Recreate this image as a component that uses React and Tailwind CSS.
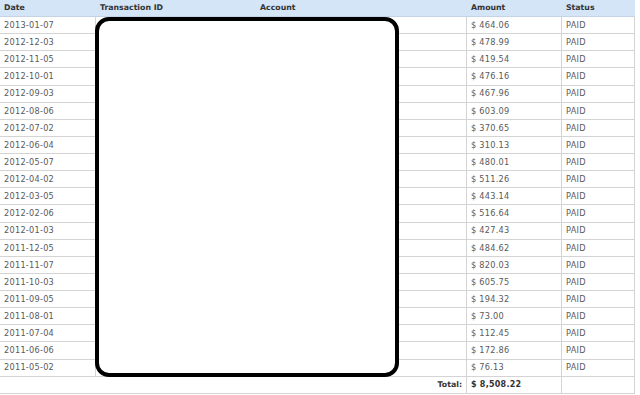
import React from "react";

const rows = [
  ["2013-01-07", "464.06"],
  ["2012-12-03", "478.99"],
  ["2012-11-05", "419.54"],
  ["2012-10-01", "476.16"],
  ["2012-09-03", "467.96"],
  ["2012-08-06", "603.09"],
  ["2012-07-02", "370.65"],
  ["2012-06-04", "310.13"],
  ["2012-05-07", "480.01"],
  ["2012-04-02", "511.26"],
  ["2012-03-05", "443.14"],
  ["2012-02-06", "516.64"],
  ["2012-01-03", "427.43"],
  ["2011-12-05", "484.62"],
  ["2011-11-07", "820.03"],
  ["2011-10-03", "605.75"],
  ["2011-09-05", "194.32"],
  ["2011-08-01", "73.00"],
  ["2011-07-04", "112.45"],
  ["2011-06-06", "172.86"],
  ["2011-05-02", "76.13"],
];

export default function App() {
  return (
    <div
      className="relative w-[640px] h-[395px] bg-white overflow-hidden text-[8.2px] tracking-[0.25px] text-[#5a5a5a]"
      style={{ fontFamily: '"DejaVu Sans", Verdana, sans-serif' }}
    >
      <div className="w-[635px] flex flex-col">
        <div className="flex h-[17px] bg-[#d3e5f7] border-b border-[#c4d4e4] font-bold text-[7.8px] tracking-normal text-[#333] items-center">
          <div className="w-[96px] pl-[4px]">Date</div>
          <div className="w-[160px] pl-[4px]">Transaction ID</div>
          <div className="w-[211px] pl-[4px]">Account</div>
          <div className="w-[95px] pl-[4px]">Amount</div>
          <div className="flex-1 pl-[4px]">Status</div>
        </div>
        {rows.map(([d, a]) => (
          <div key={d} className="flex h-[17.14px] border-b border-[#d4d4d4] items-center">
            <div className="w-[96px] h-full flex items-center pl-[4px] border-r border-[#d4d4d4]">{d}</div>
            <div className="w-[160px] h-full"></div>
            <div className="w-[211px] h-full border-r border-[#d4d4d4]"></div>
            <div className="w-[95px] h-full flex items-center pl-[4px] border-r border-[#d4d4d4]">$ {a}</div>
            <div className="flex-1 h-full flex items-center pl-[4px] border-r border-[#d4d4d4]">PAID</div>
          </div>
        ))}
        <div className="flex h-[17.14px] border-b border-[#d4d4d4] items-center font-bold text-[#333]">
          <div className="w-[467px] h-full flex items-center justify-end pr-[4px] border-r border-[#d4d4d4] text-[7.8px] tracking-normal">
            Total:
          </div>
          <div className="w-[95px] h-full flex items-center pl-[4px] border-r border-[#d4d4d4] text-[8px]">
            $ 8,508.22
          </div>
          <div className="flex-1 h-full border-r border-[#d4d4d4]"></div>
        </div>
      </div>
      <div className="absolute left-[95px] top-[17px] w-[304px] h-[360px] bg-white border-[4px] border-black rounded-[14px]"></div>
    </div>
  );
}
